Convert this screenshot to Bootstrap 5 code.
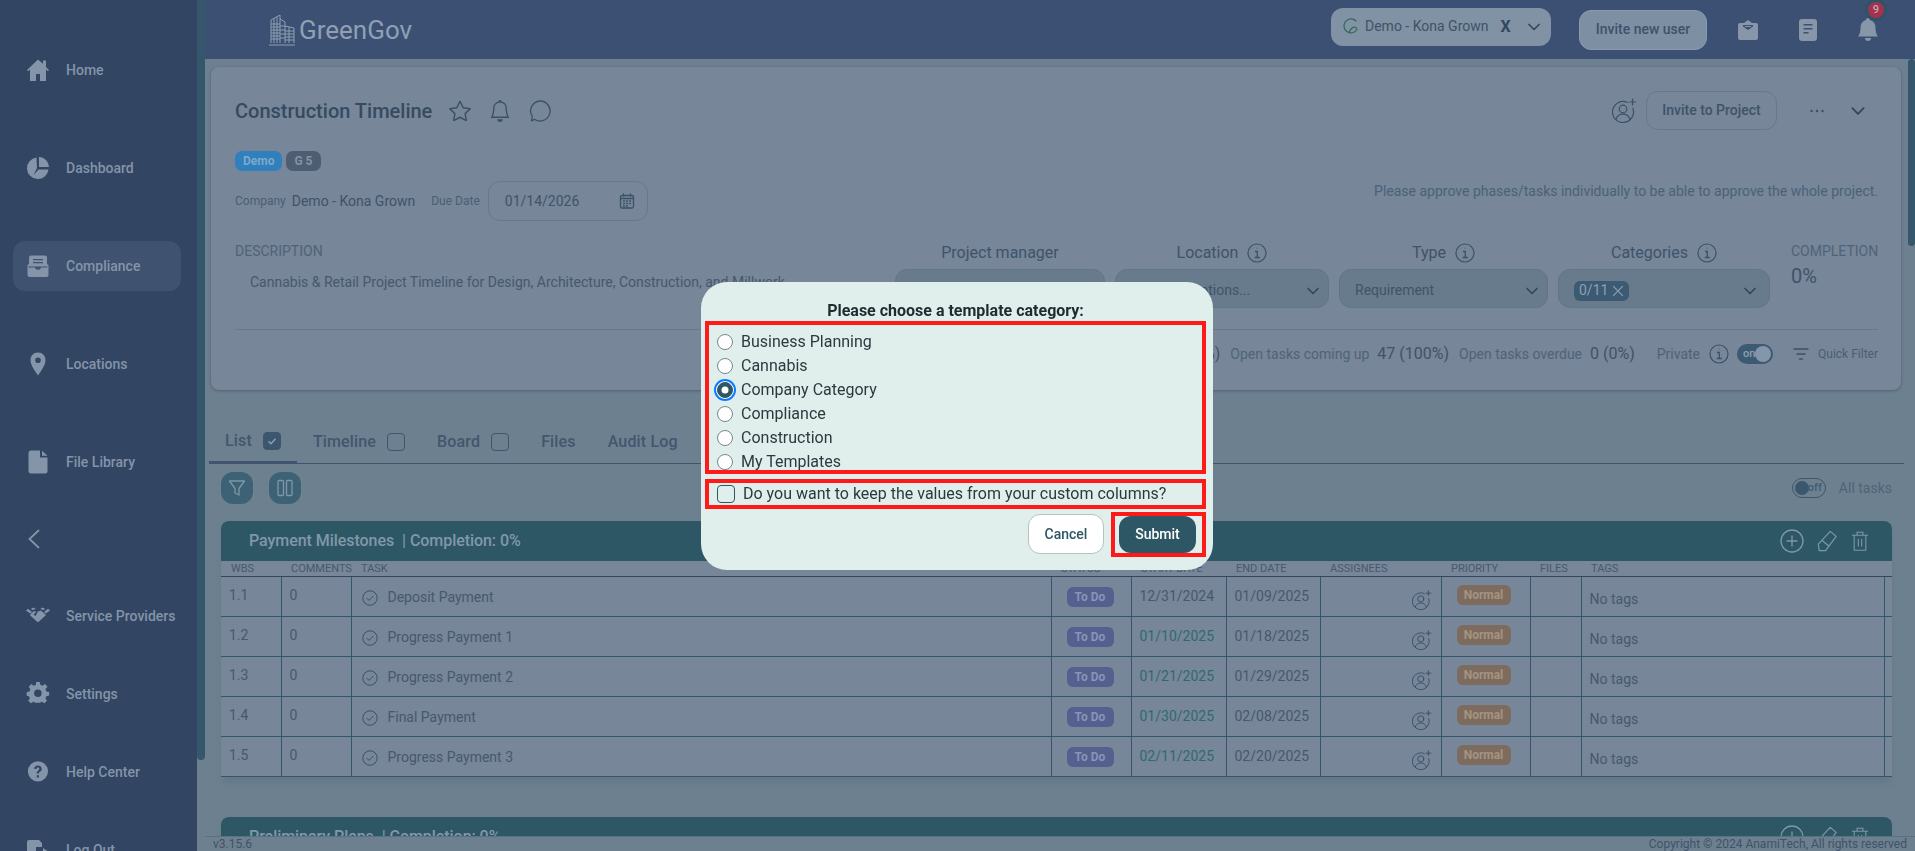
<!DOCTYPE html>
<html lang="en">
<head>
<meta charset="utf-8">
<title>GreenGov</title>
<link href="https://cdn.jsdelivr.net/npm/bootstrap@5.3.0/dist/css/bootstrap.min.css" rel="stylesheet">
<style>
html,body{height:100%;overflow:hidden}
body{font-family:Roboto,"Liberation Sans",sans-serif;font-size:14px;background:#6d8090;color:#3f5369}
.shell{display:flex;height:851px}
.side-wrap{display:flex;flex:0 0 205px}
.side{width:197px;background:#324562;padding-top:45px;overflow:hidden}
.side-item{display:flex;align-items:center;height:50px;margin:0 16px 48px 13px;padding-left:13px;border-radius:12px;color:#8494a9;font-weight:500;font-size:14px;text-decoration:none}
.side-item.tight{margin-bottom:28px}
.side-item.on{background:#3f526f}
.side-item svg{flex:0 0 24px;width:24px;height:24px;margin-right:16px;fill:currentColor}
.side-back{height:104px;margin-top:-48px;padding-left:27px;display:flex;align-items:center;color:#8494a9}
.thumb-track{width:8px}
.thumb-a{height:760px;background:#36566c;border-radius:0 0 5px 5px}
.mainc{flex:1;min-width:0;display:flex;flex-direction:column}
.topb{flex:0 0 59px;background:#3b5072;display:flex;align-items:center;padding-left:63px}
.logo{display:flex;align-items:center;gap:3px;color:#8fa0b4;font-size:26px;line-height:1}
.topr{margin-left:auto;display:flex;align-items:center}
.org-pick{display:flex;align-items:center;width:220px;height:38px;margin-top:-6px;background:#8092a4;border-radius:12px;padding:0 9px 0 12px;color:#3f5369}
.org-x{margin-left:12px;font-weight:700;font-size:16px;color:#34475d;line-height:1}
.org-leaf{margin-right:6px}
.inv-top{width:128px;height:40px;margin:0 0 0 28px;padding:0;background:#7d8fa3;border:1px solid #8a9bae;border-radius:12px;color:#3e5269;font-weight:500;font-size:14px}
.top-ic{color:#8797a9;fill:currentColor;display:block}
.ic-mail{margin-left:30px}
.ic-doc{margin-left:40px}
.bell-wrap{position:relative;margin:0 37px 0 41px}
.nbadge{position:absolute;left:10px;top:-16px;width:16px;height:16px;border-radius:50%;background:#a03450;box-shadow:0 0 0 3px #2f5266;color:#c9a3ae;font-size:11px;font-weight:500;line-height:16px;text-align:center}
.mid{flex:1;min-height:0;display:flex;overflow:hidden}
.scroller{flex:1;min-width:0}
.thumb-b{flex:0 0 7px}
.thumb-b div{height:187px;background:#36566c;border-radius:4px}
.pcard{margin:8px 7px 0 6px;height:323px;padding:24px 23px 0 24px;background:#778699;border-radius:8px;box-shadow:0 1px 3px rgba(40,55,75,.45)}
.ptitle{font-size:20px;font-weight:500;color:#364a60;margin:0;line-height:1.2}
.ln-ic{fill:none;stroke:#3a5268;stroke-width:1.3;stroke-linecap:round;stroke-linejoin:round;display:block}
.head-row{height:39px}
.t-star{margin-left:17px}
.t-more{margin-left:18px}
.t-user{margin-right:9px}
.inv-proj{width:131px;height:39px;padding:0;margin-right:32px;background:transparent;border:1px solid #66798e;border-radius:12px;color:#3f5369;font-weight:500;font-size:14px}
.t-chev{margin:0 11px 0 8px}
.tagb{display:inline-block;height:20px;line-height:20px;padding:0 8px;border-radius:7px;font-size:12px;font-weight:700}
.tag-blue{background:#2f80bd;color:#7fa7cc}
.tag-grey{background:#4d5e72;color:#8392a5}
.tags-row{margin-top:21px;gap:4px}
.info-row{margin-top:10px;height:40px}
.lab-s{font-size:12px;color:#4a5e74}
.val-m{font-size:14px;color:#3f5369}
.lab-co{margin-right:6px}
.date-box{display:flex;align-items:center;justify-content:space-between;width:160px;height:40px;margin-left:8px;padding:0 12px 0 16px;border:1px solid #66798e;border-radius:12px;color:#3f5369}
.approve{margin-left:auto;align-self:flex-start;line-height:20px;color:#4a6278}
.fields{display:grid;grid-template-columns:650px 210px 214px 209px 212px 87px;column-gap:10px;margin-top:20px}
.dlabel{font-size:14px;line-height:20px;color:#4f6378}
.dtext{margin:11px 0 0 15px;line-height:20px;color:#46596d;white-space:nowrap}
.flabel{display:flex;justify-content:center;align-items:center;gap:9px;height:24px;font-size:16px;color:#3f5369}
.fsel{display:flex;align-items:center;justify-content:space-between;height:39px;margin-top:4px;padding:4px 7px 0 15px;background:#687b8c;border:1px solid #62768a;border-radius:12px;color:#3f5369}
.fsel.wide-end{padding-right:11px}
.chipc{display:inline-flex;align-items:center;gap:4px;height:20px;padding:0 5px;background:#3c5a72;color:#8ba0b4;border-radius:6px}
.compl{margin-left:11px;margin-right:-11px}
.compl-v{font-size:20px;line-height:24px;margin-top:3px;color:#3f5369}
.pline{margin:21px 0 0;border:0;border-top:1px solid #67798d;opacity:1}
.stats{height:20px;margin-top:14px;justify-content:flex-end;color:#4f6378;white-space:nowrap}
.stat-v{font-size:16px;color:#3f5369;margin:0 10px 0 8px}
.st-priv{margin:0 9px 0 12px}
.st-filter{margin:0 8px 0 19px}
.tabbar{margin:30px 4px 0 4px;height:44px;border-bottom:1px solid #3f556f;flex-wrap:nowrap}
.tabbar .nav-link{display:flex;align-items:center;gap:11px;height:44px;padding:0 16px;color:#42566e;font-weight:500;font-size:16px;letter-spacing:.15px}
.tabbar .nav-link.active{border-bottom:3px solid #3f556f}
.tcheck{width:18px;height:18px;border:1px solid #3c566e;border-radius:4px;display:block}
.tcheck.ck{background:#3c566e;border-color:#3c566e;display:flex;align-items:center;justify-content:center}
.tools{margin:8px 16px 0 16px;height:32px}
.tool-b{width:32px;height:32px;padding:0;display:flex;align-items:center;justify-content:center;background:#3d6276;border:0;border-radius:12px}
.alltog{display:flex;align-items:center;gap:13px;color:#4f6378}
.swt{position:relative;display:inline-block;width:34px;height:20px;border-radius:10px;font-size:11px;font-weight:500;line-height:18px}
.swt.off{border:1px solid #3c566e;color:#3f5c72;padding-left:15px}
.swt.off::before{content:"";position:absolute;left:2px;top:2px;width:14px;height:14px;border-radius:50%;background:#3c566e}
.swt.ison{width:36px;background:#3c5a72;color:#8ba0b4;padding-left:6px;line-height:20px}
.swt.ison::after{content:"";position:absolute;right:2px;top:2px;width:16px;height:16px;border-radius:50%;background:#8496a9}
.tsec{margin:17px 16px 0 16px;box-shadow:0 8px 6px -2px rgba(85,105,125,.35)}
.tsec-h{display:flex;align-items:center;height:40px;padding:0 22px 0 28px;background:#2e5766;border-radius:8px 8px 0 0;color:#8098a8;font-size:16px;font-weight:500;letter-spacing:-.05px}
.tsec-acts{margin-left:auto;display:flex;align-items:center;gap:12px}
.tbl{width:100%;table-layout:fixed;border-collapse:collapse;background:#778699}
.tbl th{height:15px;padding:0 0 0 10px;font-weight:400;font-size:11px;line-height:15px;color:#46596d;text-transform:uppercase;border-bottom:1px solid #34465e;white-space:nowrap;overflow:visible}
.tbl td{height:40px;padding:0 0 0 8px;border-bottom:1px solid #34566c;border-left:1px solid #34566c;color:#46596d;font-size:14px;white-space:nowrap}
.tbl td:first-child{border-left:0}
.tbl td.up{padding-bottom:2px}
.tbl td.dgreen{color:#2f6a70}
.tbl td.tagc{padding-top:5px}
.tbl td.badgec{padding-left:15px}
.tbl td.assign{padding-right:9px;padding-top:5px;text-align:right}
.taskc{display:flex;align-items:center;gap:10px;padding-left:2px;margin-top:2px}
.todo{display:inline-block;width:47px;height:20px;line-height:20px;text-align:center;border-radius:6px;background:#55608f;color:#8a93b8;font-size:12px;font-weight:700}
.norm{display:inline-block;width:54px;height:20px;line-height:20px;text-align:center;border-radius:6px;background:#7d6c5d;color:#a59482;font-size:12px;font-weight:700;position:relative;top:-2px}
.tsec.second{margin-top:40px}
.foot{flex:0 0 13px;display:flex;justify-content:space-between;border-top:1px solid #5d7082;padding:0 8px;font-size:12px;line-height:14px;color:#3f5369;white-space:nowrap}
.dlgwrap{position:fixed;inset:0;display:flex;align-items:center;justify-content:center;z-index:1050}
.dlg{width:512px;height:288px;margin-left:-1px;padding:15px 7px 0 4px;background:#e0eeec;border-radius:26px;color:#2a3a3f}
.dlg-t{font-size:16px;font-weight:700;line-height:24px;text-align:center;margin:2px 0 -2px;color:#1f2b2f}
.rbox{border:4px solid #ff1a1a}
.rlist{height:153px;overflow:hidden;padding:5px 0 0 8px}
.rlist .form-check,.rcheck .form-check{min-height:24px;margin:0;padding-left:0;display:flex;align-items:center;font-size:16px;line-height:24px}
.rlist .form-check-input{width:16px;height:16px;margin:0 8px 0 0;flex:none;background-color:#fff;border:1px solid #77868c}
.rlist .form-check-input:checked{background-color:#2e5766;border-color:#2e5766;box-shadow:0 0 0 1px #fff,0 0 0 3px #0b7cff}
.rcheck{height:30px;margin-top:5px;padding:0 0 0 8px;display:flex;align-items:center}
.rcheck .form-check-input{width:18px;height:18px;margin:0 8px 0 0;flex:none;background-color:transparent;border:1px solid #2e5766;border-radius:4px}
.dlg-btns{display:flex;justify-content:flex-end;align-items:center;margin-top:3px;gap:7px}
.bcancel{width:76px;height:40px;padding:0;background:#fff;border:1px solid #b3c3bf;border-radius:12px;color:#2e5766;font-weight:500;font-size:14px}
.rsub{width:95px;height:45px;padding:0 6px 0 4px}
.bsubmit{display:block;width:77px;height:37px;padding:0;background:#2e5766;border:0;border-radius:12px;color:#fff;font-weight:500;font-size:14px}
</style>
</head>
<body>
<svg width="0" height="0" class="position-absolute">
<defs>
<symbol id="i-check" viewBox="0 0 16 16"><circle cx="8" cy="8" r="7.2" fill="none" stroke="#3a5268" stroke-width="1"/><path d="M4.8 8.2l2.2 2.2 4.2-4.4" fill="none" stroke="#3a5268" stroke-width="1"/></symbol>
<symbol id="i-user" viewBox="0 0 25 25"><g fill="none" stroke="#3a5268" stroke-width="1.200" stroke-linecap="round"><path d="M20.870 10.410A10.500 10.500 0 1 1 15.440 4.480"/><circle cx="11" cy="11" r="3.800"/><path d="M4 21.500c1-3.600 3.800-5.300 7-5.300s6 1.700 7 5.300"/><path d="M20.500 1v6M17.500 4h6"/></g></symbol>
<symbol id="i-info" viewBox="0 0 20 20"><circle cx="10" cy="10" r="9" fill="none" stroke="#3a5268" stroke-width="1.200"/><path d="M8 8.500h2.300v6M7.800 14.500h5M9.700 5.200h.6" fill="none" stroke="#3a5268" stroke-width="1.300"/></symbol>
<symbol id="i-chev" viewBox="0 0 16 16"><path d="M3 5.500l5 5 5-5" fill="none" stroke="#34475d" stroke-width="1.700" stroke-linecap="round" stroke-linejoin="round"/></symbol>
<symbol id="i-plus" viewBox="0 0 24 24"><circle cx="12" cy="12" r="11" fill="none" stroke="#7f97a6" stroke-width="1.300"/><path d="M12 6.500v11M6.500 12h11" fill="none" stroke="#7f97a6" stroke-width="1.300"/></symbol>
<symbol id="i-pen" viewBox="0 0 24 24"><path d="M15.500 1.500l6.500 5.500-11.500 15.500H3.500l-1-7zM6 11l8 6.500" fill="none" stroke="#7f97a6" stroke-width="1.300" stroke-linejoin="round"/></symbol>
<symbol id="i-trash" viewBox="0 0 24 24"><path d="M5 5h14v18H5zM2.500 5h19M8.500 5V1.500h7V5M10 9.500v9M14 9.500v9" fill="none" stroke="#7f97a6" stroke-width="1.300"/></symbol>
</defs>
</svg>
<div class="shell">
  <div class="side-wrap">
    <nav class="side">
      <a class="side-item" href="#"><svg viewBox="0 0 24 24"><path d="M12 1.500L1 12l1 1.200L4 11.400V23h6v-7h4v7h6V11.400l2 1.800 1-1.200-3-2.900V2.500h-3v3.200z"/></svg>Home</a>
      <a class="side-item" href="#"><svg viewBox="0 0 24 24"><path d="M10.500 1.500A10.800 10.800 0 1 0 22.500 13.500H12.500L7.500 19 11 12z"/><path d="M13 .8V11h10A10.500 10.500 0 0 0 13 .8z"/></svg>Dashboard</a>
      <a class="side-item on" href="#"><svg viewBox="0 0 24 24"><path d="M5 1.500h14a2 2 0 0 1 2 2V10l1.500 1v10a2 2 0 0 1-2 2h-17a2 2 0 0 1-2-2V11L3 10V3.500a2 2 0 0 1 2-2zm2 3.500v1.200h10V5zm0 3v1.200h10V8zm-4.500 4.500v1h6.500l1 2h4l1-2h6.500v-1z" fill-rule="evenodd"/></svg>Compliance</a>
      <a class="side-item" href="#"><svg viewBox="0 0 24 24"><path d="M12 .5C7.500.5 4.500 3.800 4.500 8c0 5 4.500 11 7.500 15.500C15 19 19.500 13 19.500 8 19.500 3.800 16.500.5 12 .5zm0 5a2.800 2.800 0 1 1 0 5.600 2.800 2.800 0 0 1 0-5.600z" fill-rule="evenodd"/></svg>Locations</a>
      <a class="side-item" href="#"><svg viewBox="0 0 24 24"><path d="M5 .5h9v7h7.500V21a2.500 2.500 0 0 1-2.500 2.500H5A2.500 2.500 0 0 1 2.500 21V3A2.500 2.500 0 0 1 5 .5zM16 .8l5.500 5H16z"/></svg>File Library</a>
      <div class="side-back"><svg width="14" height="20" viewBox="0 0 14 20"><path d="M11.500 1.500L2.500 10l9 8.500" fill="none" stroke="currentColor" stroke-width="1.800" stroke-linecap="round"/></svg></div>
      <a class="side-item tight" href="#"><svg viewBox="0 0 24 24"><path d="M12 7.500l3-1 5 4.500-7 6.500c-.8.700-1.500.700-2.200 0L3.800 11l3.700-3.800 3 .4-3 3 2 1.500zM0 6.500l2-1.800 4 3.300-1.700 1.600zM24 6.500l-2-1.800-4 3.300 1.700 1.600zM7.500 3.500L9.800 5 6.500 6 4.800 5zM16.500 3.500L14.200 5l3.300 1 1.700-1z"/></svg>Service Providers</a>
      <a class="side-item tight" href="#"><svg viewBox="0 0 24 24"><path d="M10 1h4l.6 3 2.300 1 2.600-1.700 2.800 2.800L20 8.800l1 2.300 3 .6v3.800l-3 .6-1 2.300 1.700 2.600-2.800 2.800-2.600-1.700-2.300 1-.6 0H10l-.6 0-2.300-1-2.600 1.700-2.800-2.800L3.400 18.600l-1-2.300-2.400-.6v-3.800l3-.6 1-2.300L2.300 6.100 5.100 3.300l2.600 1.700 2.300-1zm2 8a4 4 0 1 0 0 8 4 4 0 0 0 0-8z" fill-rule="evenodd" transform="translate(.6 -1) scale(.94)"/></svg>Settings</a>
      <a class="side-item tight" href="#"><svg viewBox="0 0 24 24"><path d="M12 2.500a9 9 0 1 0 0 18 9 9 0 0 0 0-18zm.9 14.500h-2v-2h2zm2.200-6.300c-.6.800-2.200 1.300-2.200 2.800h-2c0-2.500 2.300-2.900 2.300-4.300 0-.8-.5-1.200-1.200-1.200s-1.300.5-1.300 1.300h-2c0-1.900 1.500-3.100 3.300-3.100 2.700 0 4 2.400 3.100 4.500z" fill-rule="evenodd" transform="translate(-1.500 -1.500) scale(1.120)"/></svg>Help Center</a>
      <a class="side-item tight" href="#"><svg viewBox="0 0 24 24"><path d="M3 2h10l3 3v4h-6v6h6v6H3a2 2 0 0 1-2-2V4a2 2 0 0 1 2-2zm14 8l6 4-6 4v-3h-5v-2h5z"/></svg>Log Out</a>
    </nav>
    <div class="thumb-track"><div class="thumb-a"></div></div>
  </div>
  <div class="mainc">
    <header class="topb">
      <div class="logo">
        <svg width="28" height="36" viewBox="0 0 28 36"><g fill="none" stroke="#8fa0b4" stroke-width="1"><path d="M3 31V8l9-5v28M12 7l5 3v21M17 14l9 2v15M1 33h26M3 12h9M3 15h9M3 18h9M3 21h9M3 24h9M3 27h9M12 14h5M12 18h5M12 22h5M12 26h5M17 19h9M17 22h9M17 25h9M17 28h9M6 6v25M9 5v26M21 15v16"/></g></svg>
        <span>GreenGov</span>
      </div>
      <div class="topr">
        <div class="org-pick">
          <svg class="org-leaf" width="16" height="18" viewBox="0 0 16 18"><path d="M13 3A7 7 0 1 0 14 11.500C14 9 11 8.500 9 10c-1.500 1.200-2.500 3-3 5" fill="none" stroke="#2f6a58" stroke-width="1.200" stroke-linecap="round"/></svg>
          <span>Demo - Kona Grown</span>
          <span class="org-x">X</span>
          <svg class="ms-auto" width="16" height="16"><use href="#i-chev"/></svg>
        </div>
        <button class="inv-top" type="button">Invite new user</button>
        <svg class="top-ic ic-mail" width="22" height="22" viewBox="0 0 22 22"><path d="M11 1l4 3h4a2 2 0 0 1 2 2v13a2 2 0 0 1-2 2H3a2 2 0 0 1-2-2V6a2 2 0 0 1 2-2h4zM6 6v1.500l5 3.500 5-3.500V6zm2 1h6v1H8z" fill-rule="evenodd"/></svg>
        <svg class="top-ic ic-doc" width="18" height="22" viewBox="0 0 18 22"><path d="M3 0h12a3 3 0 0 1 3 3v16a3 3 0 0 1-3 3H3a3 3 0 0 1-3-3V3a3 3 0 0 1 3-3zm1.500 5v1.500h9V5zm0 4v1.500h9V9zm0 4v1.500h5V13z" fill-rule="evenodd"/></svg>
        <div class="bell-wrap">
          <svg class="top-ic" width="20" height="24" viewBox="0 0 20 24"><path d="M10 0a2 2 0 0 1 2 2c3.500 1 5.500 3.800 5.500 7.500 0 4.500 1 7 2.500 9H0c1.500-2 2.500-4.500 2.500-9C2.500 5.800 4.500 3 8 2a2 2 0 0 1 2-2zM7 20h6a3 3 0 0 1-6 0z"/></svg>
          <span class="nbadge">9</span>
        </div>
      </div>
    </header>
    <div class="mid">
      <main class="scroller">
        <section class="pcard">
          <div class="d-flex align-items-center head-row">
            <h1 class="ptitle">Construction Timeline</h1>
            <svg class="t-star" width="22" height="22" viewBox="0 0 16 16" fill="#3a5268"><path d="M2.866 14.85c-.078.444.36.791.746.593l4.39-2.256 4.389 2.256c.386.198.824-.149.746-.592l-.83-4.73 3.522-3.356c.33-.314.16-.888-.282-.95l-4.898-.696L8.465.792a.513.513 0 0 0-.927 0L5.354 5.12l-4.898.696c-.441.062-.612.636-.283.95l3.523 3.356-.83 4.73zm4.905-2.767-3.686 1.894.694-3.957a.565.565 0 0 0-.163-.505L1.71 6.745l4.052-.576a.525.525 0 0 0 .393-.288L8 2.223l1.847 3.658a.525.525 0 0 0 .393.288l4.052.575-2.906 2.77a.565.565 0 0 0-.163.506l.694 3.957-3.686-1.894a.503.503 0 0 0-.461 0z"/></svg>
            <svg class="t-more" width="22" height="22" viewBox="0 0 16 16" fill="#3a5268"><path d="M8 16a2 2 0 0 0 2-2H6a2 2 0 0 0 2 2zM8 1.918l-.797.161A4.002 4.002 0 0 0 4 6c0 .628-.134 2.197-.459 3.742-.16.767-.376 1.566-.663 2.258h10.244c-.287-.692-.502-1.49-.663-2.258C12.134 8.197 12 6.628 12 6a4.002 4.002 0 0 0-3.203-3.92L8 1.917zM14.22 12c.223.447.481.801.78 1H1c.299-.199.557-.553.78-1C2.68 10.2 3 6.88 3 6c0-2.42 1.72-4.44 4.005-4.901a1 1 0 1 1 1.99 0A5.002 5.002 0 0 1 13 6c0 .88.32 4.2 1.220 6z"/></svg>
            <svg class="ln-ic t-more" width="22" height="22" viewBox="0 0 22 22"><path d="M11 1a10 10 0 1 1-5.500 18.300L2.500 20.800l.8-4.300A10 10 0 0 1 11 1z"/></svg>
            <div class="ms-auto d-flex align-items-center">
              <svg width="25" height="25" class="t-user"><use href="#i-user"/></svg>
              <button class="inv-proj" type="button">Invite to Project</button>
              <svg width="16" height="6" viewBox="0 0 16 6" fill="#3a5268" class="me-3"><circle cx="2.500" cy="3" r="1.200"/><circle cx="8" cy="3" r="1.200"/><circle cx="13.500" cy="3" r="1.200"/></svg>
              <svg width="18" height="18" class="t-chev"><use href="#i-chev"/></svg>
            </div>
          </div>
          <div class="d-flex tags-row"><span class="tagb tag-blue">Demo</span><span class="tagb tag-grey">G 5</span></div>
          <div class="d-flex align-items-center info-row">
            <span class="lab-s lab-co">Company</span><span class="val-m me-3">Demo - Kona Grown</span>
            <span class="lab-s">Due Date</span>
            <div class="date-box"><span>01/14/2026</span>
              <svg width="16" height="16" viewBox="0 0 16 16" class="ln-ic"><rect x="1.500" y="2.500" width="13" height="12.500" rx="1.500"/><path d="M1.500 5.500h13M4.500 1v2M11.500 1v2M4.500 8h1M7.500 8h1M10.500 8h1M4.500 10.500h1M7.500 10.500h1M10.500 10.500h1M4.500 13h1M7.500 13h1"/></svg>
            </div>
            <span class="approve">Please approve phases/tasks individually to be able to approve the whole project.</span>
          </div>
          <div class="fields">
            <div>
              <div class="dlabel">DESCRIPTION</div>
              <p class="dtext">Cannabis &amp; Retail Project Timeline for Design, Architecture, Construction, and Millwork</p>
            </div>
            <div><div class="flabel">Project manager</div><div class="fsel"><span>Select</span><svg width="16" height="16"><use href="#i-chev"/></svg></div></div>
            <div><div class="flabel">Location <svg width="20" height="20"><use href="#i-info"/></svg></div><div class="fsel"><span>Choose locations...</span><svg width="16" height="16"><use href="#i-chev"/></svg></div></div>
            <div><div class="flabel">Type <svg width="20" height="20"><use href="#i-info"/></svg></div><div class="fsel"><span>Requirement</span><svg width="16" height="16"><use href="#i-chev"/></svg></div></div>
            <div><div class="flabel">Categories <svg width="20" height="20"><use href="#i-info"/></svg></div><div class="fsel wide-end"><span class="chipc">0/11 <svg width="12" height="12" viewBox="0 0 10 10"><path d="M1 1l8 8M9 1l-8 8" stroke="#8ba0b4" stroke-width="1"/></svg></span><svg width="16" height="16"><use href="#i-chev"/></svg></div></div>
            <div class="compl"><div class="dlabel">COMPLETION</div><div class="compl-v">0%</div></div>
          </div>
          <hr class="pline">
          <div class="d-flex align-items-center stats">
            <span>Open tasks</span><span class="stat-v">0 (0%)</span>
            <span>Open tasks coming up</span><span class="stat-v">47 (100%)</span>
            <span>Open tasks overdue</span><span class="stat-v">0 (0%)</span>
            <span class="st-priv">Private</span>
            <svg class="me-2" width="20" height="20"><use href="#i-info"/></svg>
            <span class="swt ison">on</span>
            <svg class="st-filter" width="18" height="14" viewBox="0 0 18 14"><path d="M2 2h14M5 7h8M7.500 12h3" stroke="#3a5268" stroke-width="1.400" stroke-linecap="round"/></svg>
            <span class="lab-s">Quick Filter</span>
          </div>
        </section>

        <ul class="nav tabbar">
          <li class="nav-item"><a class="nav-link active" href="#">List <span class="tcheck ck"><svg width="12" height="12" viewBox="0 0 12 12"><path d="M2.500 6.200l2.500 2.500 4.500-5" fill="none" stroke="#8ba0b4" stroke-width="1.400"/></svg></span></a></li>
          <li class="nav-item"><a class="nav-link" href="#">Timeline <span class="tcheck"></span></a></li>
          <li class="nav-item"><a class="nav-link" href="#">Board <span class="tcheck"></span></a></li>
          <li class="nav-item"><a class="nav-link" href="#">Files</a></li>
          <li class="nav-item"><a class="nav-link" href="#">Audit Log</a></li>
        </ul>

        <div class="d-flex align-items-center tools">
          <button class="tool-b me-3" type="button"><svg width="18" height="18" viewBox="0 0 18 18"><path d="M1.500 2h15L11 9.500V16l-4-2V9.500z" fill="none" stroke="#7f97a6" stroke-width="1.300" stroke-linejoin="round"/></svg></button>
          <button class="tool-b" type="button"><svg width="18" height="18" viewBox="0 0 18 18"><rect x="2" y="1.500" width="5.500" height="15" rx="1" fill="none" stroke="#7f97a6" stroke-width="1.300"/><rect x="10.500" y="1.500" width="5.500" height="15" rx="1" fill="none" stroke="#7f97a6" stroke-width="1.300"/></svg></button>
          <div class="alltog ms-auto"><span class="swt off">off</span><span>All tasks</span></div>
        </div>

        <section class="tsec">
          <div class="tsec-h"><span>Payment Milestones &nbsp;| Completion: 0%</span>
            <div class="tsec-acts"><svg width="24" height="24"><use href="#i-plus"/></svg><svg width="22" height="24"><use href="#i-pen"/></svg><svg width="20" height="24"><use href="#i-trash"/></svg></div>
          </div>
          <table class="tbl">
            <colgroup><col style="width:60px"><col style="width:70px"><col style="width:700px"><col style="width:80px"><col style="width:95px"><col style="width:94px"><col style="width:121px"><col style="width:89px"><col style="width:51px"><col style="width:303px"><col style="width:8px"></colgroup>
            <thead><tr><th>WBS</th><th>Comments</th><th>Task</th><th>Status</th><th>Start Date</th><th>End Date</th><th>Assignees</th><th>Priority</th><th>Files</th><th>Tags</th><th></th></tr></thead>
            <tbody>
              <tr><td class="up">1.1</td><td class="up">0</td><td><div class="taskc"><svg width="16" height="16"><use href="#i-check"/></svg>Deposit Payment</div></td><td class="badgec"><span class="todo">To Do</span></td><td>12/31/2024</td><td>01/09/2025</td><td class="assign"><svg width="20" height="20"><use href="#i-user"/></svg></td><td class="badgec"><span class="norm">Normal</span></td><td></td><td class="tagc">No tags</td><td></td></tr>
              <tr><td class="up">1.2</td><td class="up">0</td><td><div class="taskc"><svg width="16" height="16"><use href="#i-check"/></svg>Progress Payment 1</div></td><td class="badgec"><span class="todo">To Do</span></td><td class="dgreen">01/10/2025</td><td>01/18/2025</td><td class="assign"><svg width="20" height="20"><use href="#i-user"/></svg></td><td class="badgec"><span class="norm">Normal</span></td><td></td><td class="tagc">No tags</td><td></td></tr>
              <tr><td class="up">1.3</td><td class="up">0</td><td><div class="taskc"><svg width="16" height="16"><use href="#i-check"/></svg>Progress Payment 2</div></td><td class="badgec"><span class="todo">To Do</span></td><td class="dgreen">01/21/2025</td><td>01/29/2025</td><td class="assign"><svg width="20" height="20"><use href="#i-user"/></svg></td><td class="badgec"><span class="norm">Normal</span></td><td></td><td class="tagc">No tags</td><td></td></tr>
              <tr><td class="up">1.4</td><td class="up">0</td><td><div class="taskc"><svg width="16" height="16"><use href="#i-check"/></svg>Final Payment</div></td><td class="badgec"><span class="todo">To Do</span></td><td class="dgreen">01/30/2025</td><td>02/08/2025</td><td class="assign"><svg width="20" height="20"><use href="#i-user"/></svg></td><td class="badgec"><span class="norm">Normal</span></td><td></td><td class="tagc">No tags</td><td></td></tr>
              <tr><td class="up">1.5</td><td class="up">0</td><td><div class="taskc"><svg width="16" height="16"><use href="#i-check"/></svg>Progress Payment 3</div></td><td class="badgec"><span class="todo">To Do</span></td><td class="dgreen">02/11/2025</td><td>02/20/2025</td><td class="assign"><svg width="20" height="20"><use href="#i-user"/></svg></td><td class="badgec"><span class="norm">Normal</span></td><td></td><td class="tagc">No tags</td><td></td></tr>
            </tbody>
          </table>
        </section>

        <section class="tsec second">
          <div class="tsec-h"><span>Preliminary Plans &nbsp;| Completion: 0%</span>
            <div class="tsec-acts"><svg width="24" height="24"><use href="#i-plus"/></svg><svg width="22" height="24"><use href="#i-pen"/></svg><svg width="20" height="24"><use href="#i-trash"/></svg></div>
          </div>
        </section>
      </main>
      <div class="thumb-b"><div></div></div>
    </div>
    <footer class="foot"><span>v3.15.6</span><span>Copyright © 2024 AnamiTech, All rights reserved</span></footer>
  </div>
</div>

<div class="dlgwrap">
  <div class="dlg" role="dialog">
    <h2 class="dlg-t">Please choose a template category:</h2>
    <div class="rbox rlist">
      <div class="form-check"><input class="form-check-input" type="radio" name="cat" id="c1"><label class="form-check-label" for="c1">Business Planning</label></div>
      <div class="form-check"><input class="form-check-input" type="radio" name="cat" id="c2"><label class="form-check-label" for="c2">Cannabis</label></div>
      <div class="form-check"><input class="form-check-input" type="radio" name="cat" id="c3" checked><label class="form-check-label" for="c3">Company Category</label></div>
      <div class="form-check"><input class="form-check-input" type="radio" name="cat" id="c4"><label class="form-check-label" for="c4">Compliance</label></div>
      <div class="form-check"><input class="form-check-input" type="radio" name="cat" id="c5"><label class="form-check-label" for="c5">Construction</label></div>
      <div class="form-check"><input class="form-check-input" type="radio" name="cat" id="c6"><label class="form-check-label" for="c6">My Templates</label></div>
    </div>
    <div class="rbox rcheck">
      <div class="form-check"><input class="form-check-input" type="checkbox" id="keep"><label class="form-check-label" for="keep">Do you want to keep the values from your custom columns?</label></div>
    </div>
    <div class="dlg-btns">
      <button class="bcancel" type="button">Cancel</button>
      <div class="rbox rsub"><button class="bsubmit" type="button">Submit</button></div>
    </div>
  </div>
</div>
<script src="https://cdn.jsdelivr.net/npm/bootstrap@5.3.0/dist/js/bootstrap.bundle.min.js"></script>
</body>
</html>
